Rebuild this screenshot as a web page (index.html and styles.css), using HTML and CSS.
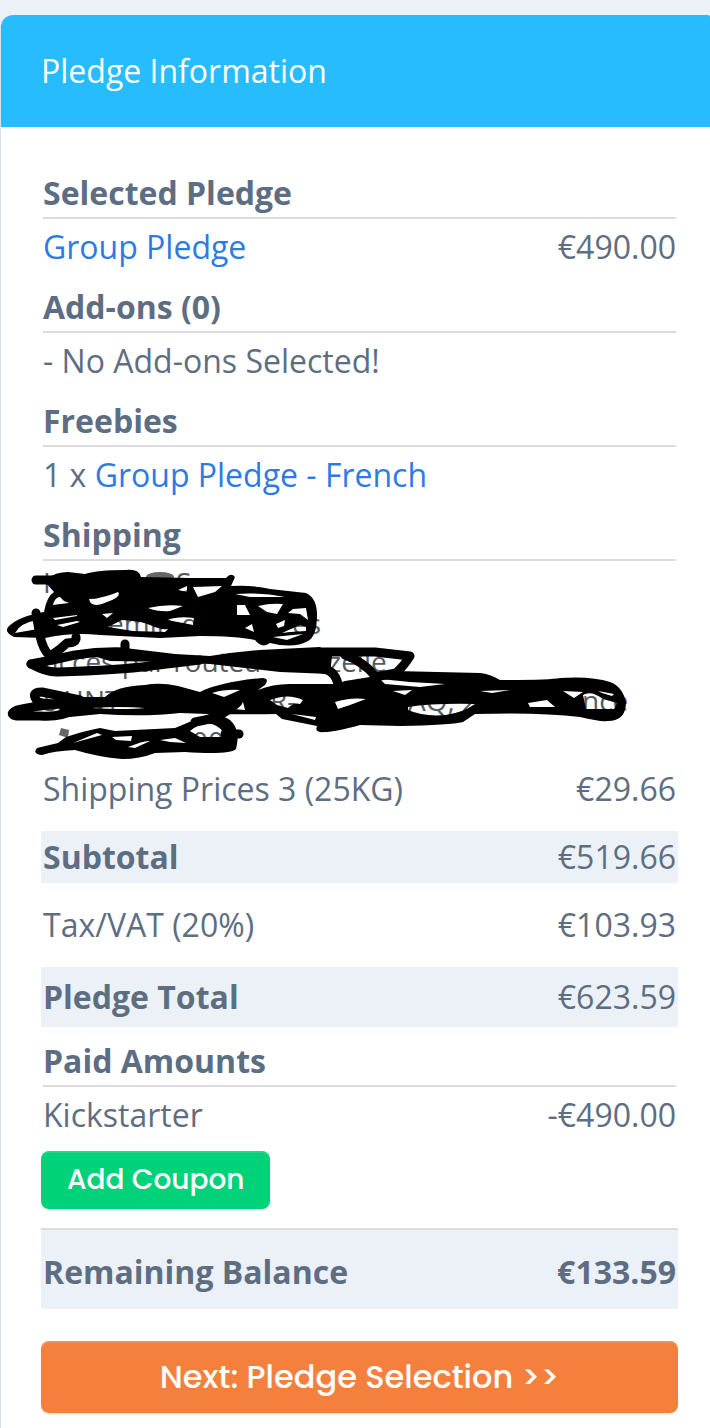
FILE: index.html
```
<!DOCTYPE html>
<html lang="en">
<head>
    <meta charset="UTF-8">
    <meta name="viewport" content="width=device-width, initial-scale=1.0">
    <title>Pledge Information</title>
    <link rel="stylesheet" href="styles.css">
</head>
<body>
    <div class="card">
        <div class="card-header">
            <h1>Pledge Information</h1>
        </div>
        <div class="card-body">
            <table class="summary">
                <tr class="heading"><th colspan="2"><div>Selected Pledge</div></th></tr>
                <tr class="item">
                    <td><a href="#pledge">Group Pledge</a></td>
                    <td class="price">€490.00</td>
                </tr>
                <tr class="heading"><th colspan="2"><div>Add-ons (0)</div></th></tr>
                <tr class="item"><td colspan="2">- No Add-ons Selected!</td></tr>
                <tr class="heading"><th colspan="2"><div>Freebies</div></th></tr>
                <tr class="item"><td colspan="2">1 x <a href="#freebie">Group Pledge - French</a></td></tr>
                <tr class="heading"><th colspan="2"><div>Shipping</div></th></tr>
                <tr>
                    <td colspan="2">
                        <div class="address">
                            <!-- address is scribbled out by hand -->
                            <svg class="scribble" width="710" height="200" viewBox="0 561 710 200">
                                <g class="address-text">
                                    <text x="43" y="593">I</text>
                                    <text x="176" y="593">S</text>
                                    <text x="108" y="634">emin d</text>
                                    <text x="292" y="634">es</text>
                                    <text x="43" y="672">acces par route</text>
                                    <text x="244" y="672">d</text>
                                    <text x="328" y="672">zelle</text>
                                    <text x="43" y="711">SAINT</text>
                                    <text x="270" y="711">R-</text>
                                    <text x="408" y="711">AQ, 2</text>
                                    <text x="582" y="711">nce</text>
                                    <text x="192" y="752">00</text>
                                </g>
                                <g class="smudge">
                                    <ellipse cx="160" cy="577" rx="14" ry="5"/>
                                    <ellipse cx="94" cy="595" rx="7" ry="4"/>
                                    <path d="M61 728l8 2-1 8-9-3z"/>
                                </g>
                                <path class="ink" fill-rule="evenodd" d="M48 578Q56 572 68 572L85 574Q98 570 125 570Q139 568 141 577L190 578H226Q231 572 235 577L231 586Q254 585 270 589L306 593Q317 598 317 615Q317 636 308 641Q294 649 270 643Q262 649 255 640Q235 636 200 636L160 638L100 635Q72 632 45 638L14 637Q3 632 9 626Q17 618 38 613L44 612Q47 596 54 592L46 583Z
                                    M53 605Q55 597 60 597L64 601L69 603Q60 604 53 605Z
                                    M89 599Q104 598 118 592Q122 597 107 602Q91 609 89 599Z
                                    M178 590L187 586L187 592Z
                                    M193 587L222 586L215 592L198 597Z
                                    M148 608Q165 604 183 606L170 611Q158 612 148 608Z
                                    M53 618L77 615V616L55 620Z
                                    M15 633Q20 623 37 620L38 629Z
                                    M57 625L77 621L80 622L63 627Z
                                    M102 614L113 613L107 618Z
                                    M108 627L122 620Q142 621 150 625Q160 630 168 629L165 632L133 631Z
                                    M167 620Q178 616 194 618L193 625L183 623Z
                                    M235 594Q260 592 285 597L250 597Z
                                    M237 605L245 605L250 615L237 615Z
                                    M258 606Q270 603 283 604L277 614L267 612Z
                                    M288 613L293 609L306 608L308 620L300 614Z
                                    M245 628L252 624L254 632Z
                                    M276 624L285 620L284 626L278 628Z
                                    M282 633L300 625L306 627L306 631L290 632Z
                                    M273 637L303 634L287 640Z"/>
                                <path class="ink" d="M90 655L125 648L175 654L210 656Q235 652 260 650L320 647L332 656L330 674L280 672L210 664L170 662L110 661Z"/>
                                <path class="ink" fill-rule="evenodd" d="M60 697L105 697Q116 686 145 685Q160 682 178 686L200 692Q220 682 262 678Q270 678 265 685L258 690Q272 684 290 684L336 684L345 681L370 677L395 671L480 673Q490 674 500 680Q550 680 560 678Q592 676 610 682Q622 686 626 702Q626 721 608 721Q600 722 580 717Q540 712 475 714L463 722Q450 725 400 726L360 725Q335 732 325 732Q314 733 317 726L282 719L276 714Q220 715 180 713Q145 717 100 714L60 718Z
                                    M92 708Q120 706 145 708Q125 710 92 708Z
                                    M212 693Q225 689 240 690L224 697Z
                                    M233 709L243 702L245 710Z
                                    M270 700Q288 693 303 700L300 704Q294 702 288 708L277 705Z
                                    M292 714L316 717L315 720Z
                                    M335 702Q350 697 366 699L350 705L338 709Z
                                    M380 679L410 682L445 684L420 687L385 684Z
                                    M393 691L412 690L405 695Z
                                    M408 707Q434 703 475 704Q464 712 446 715Q424 717 408 710Z
                                    M480 691L510 690L492 693Z
                                    M528 703L547 700L555 707L530 707Z
                                    M563 691L583 692L574 698Z
                                    M583 695Q591 690 603 699L617 703L614 709H586Z
                                    M598 691L614 694L612 696L602 693Z"/>
                                <path class="ink" fill-rule="evenodd" d="M37 748L58 743L66 737Q84 731 100 728L115 731L175 728Q190 722 200 717Q218 712 230 720Q241 730 236 749Q230 755 185 752L155 753Q140 759 122 759Q98 757 75 750Q53 751 42 755Q32 754 37 748Z
                                    M73 743L97 733L102 735L80 741Z
                                    M112 737L132 736L131 741L116 740Z
                                    M190 731Q200 722 212 724Q224 728 224 737L200 737Z
                                    M160 740L175 738L186 743L170 742Z
                                    M128 747Q145 740 150 741L135 748Z"/>
                                <g class="pen">
                                    <path d="M36 580H70"/>
                                    <path d="M36 613L40 636Q43 650 50 656Q60 650 67 643Q77 643 76 637"/>
                                    <path d="M31 664Q54 660 75 655Q100 651 125 652"/>
                                    <path d="M31 664Q48 673 58 672Q120 670 150 666L200 660"/>
                                    <path d="M125 652V644"/>
                                    <path d="M320 652L375 652L410 656Q404 666 396 673L380 676"/>
                                    <path d="M322 669Q337 670 339 690"/>
                                    <path d="M345 655Q364 662 375 676"/>
                                    <path d="M80 701Q52 706 38 702Q29 692 42 692L80 700"/>
                                    <path d="M78 708Q60 718 40 716H16Q8 714 17 710Q32 706 72 703"/>
                                    <path d="M195 722Q222 718 238 702"/>
                                    <path d="M225 734H239"/>
                                </g>
                            </svg>
                        </div>
                    </td>
                </tr>
                <tr class="item last">
                    <td>Shipping Prices 3 (25KG)</td>
                    <td class="price">€29.66</td>
                </tr>
                <tr class="subtotal">
                    <th>Subtotal</th>
                    <td class="price">€519.66</td>
                </tr>
                <tr class="tax">
                    <td>Tax/VAT (20%)</td>
                    <td class="price">€103.93</td>
                </tr>
                <tr class="total">
                    <th>Pledge Total</th>
                    <td class="price">€623.59</td>
                </tr>
                <tr class="heading"><th colspan="2"><div>Paid Amounts</div></th></tr>
                <tr class="item">
                    <td>Kickstarter</td>
                    <td class="price">-€490.00</td>
                </tr>
            </table>
            <button type="button" class="btn btn-coupon">Add Coupon</button>
            <div class="balance">
                <span>Remaining Balance</span>
                <span>€133.59</span>
            </div>
            <button type="button" class="btn btn-next">Next: Pledge Selection &gt;&gt;</button>
        </div>
    </div>
</body>
</html>
```
FILE: styles.css
```
* {
    box-sizing: border-box;
}
body {
    margin: 0;
    padding-top: 15px;
    background: #ecf1f8;
    color: #5e6e82;
    font-family: 'Open Sans', Arial, sans-serif;
    font-size: 32px;
    line-height: 48px;
}
a {
    color: #2c7be5;
    text-decoration: none;
}
.card {
    background: #fff;
    border-left: 1px solid #d8e2ef;
    border-radius: 12px 2px 0 0;
}
.card-header {
    background: #27bcfd;
    border-radius: 12px 2px 0 0;
    padding: 32px 40px;
}
h1 {
    margin: 0;
    color: #fff;
    font-size: 32px;
    font-weight: 400;
}
.card-body {
    padding: 32px 32px 15px 40px;
}
.summary {
    width: 100%;
    border-collapse: collapse;
}
.summary th,
.summary td {
    padding: 0 2px;
    text-align: left;
}
.summary th {
    font-weight: 700;
}
.summary .price {
    text-align: right;
}
.summary .heading th {
    padding-top: 10px;
}
.heading div {
    border-bottom: 2px solid #dcdcdc;
}
.summary .item td {
    padding-top: 4px;
    padding-bottom: 2px;
}
.summary .item.last td,
.summary .tax td {
    padding-bottom: 18px;
}
.summary .tax td {
    padding-top: 18px;
}
.subtotal,
.total,
.balance {
    background: #ecf1f8;
}
.subtotal th,
.subtotal td {
    height: 52px;
}
.total th,
.total td {
    height: 60px;
}
.address {
    position: relative;
    height: 200px;
}
.scribble {
    position: absolute;
    top: 0;
    left: -43px;
}
.address-text {
    fill: #565a62;
    font-size: 28px;
}
.smudge {
    fill: #666;
}
.ink {
    fill: #000;
}
.pen {
    fill: none;
    stroke: #000;
    stroke-width: 9;
    stroke-linecap: round;
    stroke-linejoin: round;
}
.btn {
    display: block;
    border: 0;
    border-radius: 8px;
    color: #fff;
    font-family: Poppins, Inter, sans-serif;
    font-weight: 500;
    box-shadow: inset 0 2px 0 rgba(255,255,255,0.12), 0 1px 2px rgba(0,0,0,0.1);
    cursor: pointer;
}
.btn-coupon {
    margin-top: 10px;
    padding: 8px 26px;
    background: #00d27a;
    font-size: 28px;
    line-height: 42px;
}
.btn-next {
    width: 100%;
    margin-top: 32px;
    padding: 12px 26px;
    background: #f5803e;
    font-size: 32px;
    line-height: 48px;
}
.balance {
    display: flex;
    justify-content: space-between;
    margin-top: 19px;
    padding: 18px 2px 13px;
    border-top: 2px solid #dcdcdc;
    font-weight: 700;
}
```
